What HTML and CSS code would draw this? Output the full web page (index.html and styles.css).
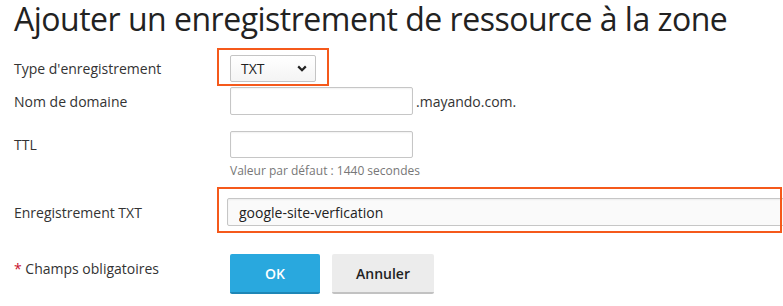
FILE: index.html
```html
<!DOCTYPE html>
<html lang="fr">
<head>
    <meta charset="UTF-8">
    <meta name="viewport" content="width=device-width, initial-scale=1.0">
    <link rel="stylesheet" href="styles.css">
    <title>Ajouter un enregistrement</title>
</head>
<body>
    <h1 class="pageTitle">Ajouter un enregistrement de ressource à la zone</h1>

    <form class="recordForm">
        <div class="formRow rowType">
            <label class="fieldLabel">Type d'enregistrement</label>
            <div class="fieldValue">
                <span class="highlight highlightSelect">
                    <span class="selectBox">
                        <span class="selectText">TXT</span>
                        <svg class="selectArrow" width="10" height="7" viewBox="0 0 10 7">
                            <path d="M1.2 1.4 L5 5.2 L8.8 1.4" fill="none" stroke="#222" stroke-width="2.2"/>
                        </svg>
                    </span>
                </span>
            </div>
        </div>

        <div class="formRow rowDomain">
            <label class="fieldLabel">Nom de domaine</label>
            <div class="fieldValue">
                <input type="text" class="textField">
                <span class="domainSuffix">.mayando.com.</span>
            </div>
        </div>

        <div class="formRow rowTtl">
            <label class="fieldLabel">TTL</label>
            <div class="fieldValue">
                <input type="text" class="textField ttlField">
            </div>
        </div>
        <div class="hintText">Valeur par défaut : 1440 secondes</div>

        <div class="formRow rowTxt">
            <label class="fieldLabel">Enregistrement TXT</label>
            <div class="fieldValue">
                <span class="highlight highlightTxt">
                    <input type="text" class="textField txtField" value="google-site-verfication">
                </span>
            </div>
        </div>

        <div class="formRow rowButtons">
            <div class="fieldLabel requiredNote"><span class="asterisk">*</span> Champs obligatoires</div>
            <div class="fieldValue">
                <button type="button" class="btn btnPrimary">OK</button>
                <button type="button" class="btn btnCancel">Annuler</button>
            </div>
        </div>
    </form>
</body>
</html>
```

FILE: styles.css
```css
html {
    overflow: hidden;
}

body {
    margin: 0;
    padding: 0 0 0 14px;
    background-color: #fff;
    color: #333;
    font-family: "Open Sans", "Liberation Sans", sans-serif;
    font-size: 14px;
}

.pageTitle {
    margin: 0;
    font-size: 32px;
    line-height: 38px;
    font-weight: 400;
    letter-spacing: -0.5px;
    color: #222;
    white-space: nowrap;
}

.formRow {
    display: flex;
    align-items: center;
}

.fieldLabel {
    width: 216px;
    flex: none;
    color: #333;
}

.fieldValue {
    display: flex;
    align-items: center;
}

/* orange annotation frames */
.highlight {
    position: relative;
    display: inline-block;
}

.highlight::after {
    content: "";
    position: absolute;
    border: 2px solid #f5591b;
    pointer-events: none;
}

.highlightSelect::after {
    top: -7px;
    left: -13px;
    right: -13px;
    bottom: -4px;
}

.highlightTxt::after {
    top: -11px;
    left: -10px;
    right: 8px;
    bottom: -7px;
}

.rowType {
    margin-top: 17px;
    height: 27px;
}

.selectBox {
    display: flex;
    align-items: center;
    justify-content: space-between;
    box-sizing: border-box;
    width: 86px;
    height: 27px;
    padding: 0 8px 0 10px;
    border: 1px solid #c4c4c4;
    border-radius: 2px;
    background: linear-gradient(#fff, #f4f4f4);
    font-size: 14px;
    color: #222;
}

.selectArrow {
    display: block;
}

.rowDomain {
    margin-top: 5px;
}

.textField {
    box-sizing: border-box;
    width: 183px;
    height: 28px;
    margin: 0;
    padding: 0 8px;
    border: 1px solid #c6c6c6;
    border-radius: 2px;
    background: #fff;
    box-shadow: inset 0 1px 2px rgba(0, 0, 0, 0.06);
    font-family: inherit;
    font-size: 14px;
    color: #222;
}

.domainSuffix {
    margin-left: 3px;
    color: #333;
}

.rowTtl {
    margin-top: 16px;
}

.ttlField {
    height: 27px;
}

.hintText {
    margin: 5px 0 0 216px;
    font-size: 12px;
    line-height: 16px;
    color: #777;
}

.rowTxt {
    margin-top: 19px;
}

.rowTxt .fieldValue {
    margin-left: -3px;
}

.txtField {
    width: 563px;
    background: #fafafa;
    padding-left: 11px;
}

.rowButtons {
    margin-top: 28px;
    align-items: flex-start;
}

.requiredNote {
    padding-top: 5px;
}

.asterisk {
    color: #c8102e;
}

.btn {
    height: 40px;
    margin: 0 12px 0 0;
    border: 0;
    border-radius: 2px;
    font-family: inherit;
    font-size: 14px;
    font-weight: 600;
    cursor: pointer;
}

.btnPrimary {
    width: 90px;
    background-color: #29a8de;
    border-bottom: 2px solid #1e86b6;
    color: #fff;
}

.btnCancel {
    width: 102px;
    background-color: #ececec;
    border-bottom: 2px solid #c2c2c2;
    color: #222;
}
```
